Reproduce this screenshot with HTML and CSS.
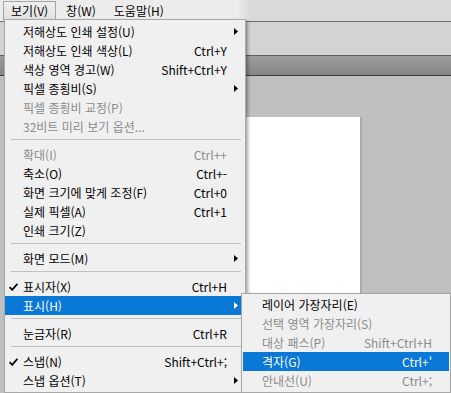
FILE: index.html
```html
<!DOCTYPE html>
<html lang="ko">
<head>
<meta charset="utf-8">
<title>보기 메뉴</title>
<link rel="stylesheet" href="styles.css">
</head>
<body>
<div class="app">
  <div class="menubar">
    <div class="mb-item open">보기(V)</div>
    <div class="mb-item">창(W)</div>
    <div class="mb-item">도움말(H)</div>
  </div>
  <div class="toolbar"></div>
  <div class="tabband"></div>
  <div class="workspace">
    <div class="page"></div>
  </div>

  <div class="menu main-menu">
    <div class="row"><span class="chk"></span><span class="lbl">저해상도 인쇄 설정(U)</span><span class="sc"></span><span class="arr"><svg width="4" height="7" viewBox="0 0 4 7"><path d="M0 0L4 3.5L0 7Z"/></svg></span></div>
    <div class="row"><span class="chk"></span><span class="lbl">저해상도 인쇄 색상(L)</span><span class="sc">Ctrl+Y</span><span class="arr"></span></div>
    <div class="row"><span class="chk"></span><span class="lbl">색상 영역 경고(W)</span><span class="sc">Shift+Ctrl+Y</span><span class="arr"></span></div>
    <div class="row"><span class="chk"></span><span class="lbl">픽셀 종횡비(S)</span><span class="sc"></span><span class="arr"><svg width="4" height="7" viewBox="0 0 4 7"><path d="M0 0L4 3.5L0 7Z"/></svg></span></div>
    <div class="row disabled"><span class="chk"></span><span class="lbl">픽셀 종횡비 교정(P)</span><span class="sc"></span><span class="arr"></span></div>
    <div class="row disabled"><span class="chk"></span><span class="lbl">32비트 미리 보기 옵션...</span><span class="sc"></span><span class="arr"></span></div>
    <div class="sep"></div>
    <div class="row disabled"><span class="chk"></span><span class="lbl">확대(I)</span><span class="sc">Ctrl++</span><span class="arr"></span></div>
    <div class="row"><span class="chk"></span><span class="lbl">축소(O)</span><span class="sc">Ctrl+-</span><span class="arr"></span></div>
    <div class="row"><span class="chk"></span><span class="lbl">화면 크기에 맞게 조정(F)</span><span class="sc">Ctrl+0</span><span class="arr"></span></div>
    <div class="row"><span class="chk"></span><span class="lbl">실제 픽셀(A)</span><span class="sc">Ctrl+1</span><span class="arr"></span></div>
    <div class="row"><span class="chk"></span><span class="lbl">인쇄 크기(Z)</span><span class="sc"></span><span class="arr"></span></div>
    <div class="sep"></div>
    <div class="row"><span class="chk"></span><span class="lbl">화면 모드(M)</span><span class="sc"></span><span class="arr"><svg width="4" height="7" viewBox="0 0 4 7"><path d="M0 0L4 3.5L0 7Z"/></svg></span></div>
    <div class="sep"></div>
    <div class="row"><span class="chk"><svg width="9" height="8" viewBox="0 0 9 8"><path d="M0.6 4.2L3.2 6.9L8.4 0.8" fill="none" stroke-width="1.7"/></svg></span><span class="lbl">표시자(X)</span><span class="sc">Ctrl+H</span><span class="arr"></span></div>
    <div class="row active"><span class="chk"></span><span class="lbl">표시(H)</span><span class="sc"></span><span class="arr"><svg width="4" height="7" viewBox="0 0 4 7"><path d="M0 0L4 3.5L0 7Z"/></svg></span></div>
    <div class="sep"></div>
    <div class="row"><span class="chk"></span><span class="lbl">눈금자(R)</span><span class="sc">Ctrl+R</span><span class="arr"></span></div>
    <div class="sep"></div>
    <div class="row"><span class="chk"><svg width="9" height="8" viewBox="0 0 9 8"><path d="M0.6 4.2L3.2 6.9L8.4 0.8" fill="none" stroke-width="1.7"/></svg></span><span class="lbl">스냅(N)</span><span class="sc">Shift+Ctrl+;</span><span class="arr"></span></div>
    <div class="row"><span class="chk"></span><span class="lbl">스냅 옵션(T)</span><span class="sc"></span><span class="arr"><svg width="4" height="7" viewBox="0 0 4 7"><path d="M0 0L4 3.5L0 7Z"/></svg></span></div>
  </div>

  <div class="menu sub-menu">
    <div class="row"><span class="chk"></span><span class="lbl">레이어 가장자리(E)</span><span class="sc"></span><span class="arr"></span></div>
    <div class="row disabled"><span class="chk"></span><span class="lbl">선택 영역 가장자리(S)</span><span class="sc"></span><span class="arr"></span></div>
    <div class="row disabled"><span class="chk"></span><span class="lbl">대상 패스(P)</span><span class="sc">Shift+Ctrl+H</span><span class="arr"></span></div>
    <div class="row active"><span class="chk"></span><span class="lbl">격자(G)</span><span class="sc">Ctrl+'</span><span class="arr"></span></div>
    <div class="row disabled"><span class="chk"></span><span class="lbl">안내선(U)</span><span class="sc">Ctrl+;</span><span class="arr"></span></div>
  </div>
</div>
</body>
</html>
```

FILE: styles.css
```css
html, body {
  margin: 0;
  padding: 0;
}
body {
  width: 451px;
  height: 393px;
  overflow: hidden;
  font-family: "Noto Sans CJK KR", "Noto Sans", sans-serif;
  font-size: 12px;
  color: #000;
}
.app {
  position: relative;
  width: 451px;
  height: 393px;
  overflow: hidden;
  display: flex;
  flex-direction: column;
  background: #c0c0c0;
}
.menubar {
  flex: 0 0 21px;
  height: 21px;
  display: flex;
  align-items: flex-start;
  gap: 2px;
  padding-left: 3px;
  box-sizing: border-box;
  background: linear-gradient(to right, #ececec 0, #ececec 238px, #d9d9d9 250px, #d9d9d9 100%);
}
.mb-item {
  height: 19px;
  margin-top: 1px;
  padding: 0 7px;
  line-height: 18px;
  border: 1px solid transparent;
  border-bottom: none;
  box-sizing: border-box;
  white-space: nowrap;
}
.mb-item.open {
  border-color: #a4a4a4;
  background: linear-gradient(#eeeeee, #e2e2e2);
}
.toolbar {
  flex: 0 0 34px;
  box-sizing: border-box;
  border-top: 1px solid #6e6e6e;
  background: #d3d3d3;
}
.tabband {
  flex: 0 0 21px;
  box-sizing: border-box;
  border-top: 1px solid #5e5e5e;
  border-bottom: 1px solid #3c3c3c;
  background: linear-gradient(#9c9c9c, #868686);
}
.workspace {
  flex: 1 1 auto;
  min-height: 0;
  overflow: hidden;
  display: flex;
  align-items: flex-start;
  padding: 41px 0 0 150px;
  background: #c0c0c0;
}
.page {
  flex: 0 0 210px;
  height: 300px;
  background: #ffffff;
  box-shadow: 2px 0 0 #a9a9a9;
}

/* menus */
.menu {
  position: absolute;
  box-sizing: border-box;
  background: #f0f0f0;
  border: 1px solid #a8a8a8;
  box-shadow: 2px 2px 3px rgba(0, 0, 0, 0.35);
  overflow: hidden;
}
.main-menu {
  left: 4px;
  top: 19px;
  width: 242px;
  height: 374px;
  padding-top: 2px;
}
.sub-menu {
  left: 241px;
  top: 293px;
  width: 210px;
  height: 100px;
  padding: 1px 1px 0;
}
.row {
  display: grid;
  grid-template-columns: 18px 1fr auto 18px;
  height: 19px;
  line-height: 19px;
  white-space: nowrap;
}
.sub-menu .row {
  grid-template-columns: 19px 1fr auto 17px;
}
.row.disabled {
  color: #8b8b8b;
}
.row.active {
  background: #0a78d6;
  color: #ffffff;
}
.chk {
  display: flex;
  align-items: center;
  padding-left: 4px;
}
.chk svg path {
  stroke: #000;
}
.arr {
  display: flex;
  align-items: center;
  padding-left: 7px;
}
.arr svg path {
  fill: #000;
}
.row.active .arr svg path {
  fill: #ffffff;
}
.sep {
  height: 1px;
  margin: 3px 4px 5px 6px;
  background: #c2c2c2;
}
```
